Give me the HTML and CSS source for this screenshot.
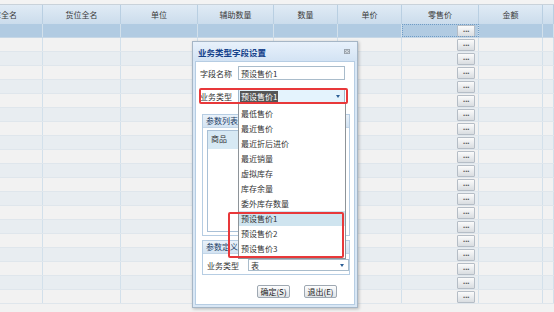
FILE: index.html
```html
<!DOCTYPE html>
<html lang="zh-CN">
<head>
<meta charset="utf-8">
<title>业务类型字段设置</title>
<link rel="stylesheet" href="styles.css">
</head>
<body>
<div class="screen">
  <div class="topstrip"></div>
  <div class="hdr">
    <span class="c first"><b>仓库全名</b></span><span class="c">货位全名</span><span class="c">单位</span><span class="c">辅助数量</span><span class="c">数量</span><span class="c">单价</span><span class="c">零售价</span><span class="c">金额</span><span class="c"></span>
  </div>
  <div class="rows">
    <div class="row sel"><span></span><span></span><span></span><span></span><span></span><span></span><span class="pc focus"><i class="dots">...</i></span><span></span><span></span></div>
    <div class="row"><span></span><span></span><span></span><span></span><span></span><span></span><span class="pc"><i class="dots">...</i></span><span></span><span></span></div>
    <div class="row alt"><span></span><span></span><span></span><span></span><span></span><span></span><span class="pc"><i class="dots">...</i></span><span></span><span></span></div>
    <div class="row"><span></span><span></span><span></span><span></span><span></span><span></span><span class="pc"><i class="dots">...</i></span><span></span><span></span></div>
    <div class="row alt"><span></span><span></span><span></span><span></span><span></span><span></span><span class="pc"><i class="dots">...</i></span><span></span><span></span></div>
    <div class="row"><span></span><span></span><span></span><span></span><span></span><span></span><span class="pc"><i class="dots">...</i></span><span></span><span></span></div>
    <div class="row alt"><span></span><span></span><span></span><span></span><span></span><span></span><span class="pc"><i class="dots">...</i></span><span></span><span></span></div>
    <div class="row"><span></span><span></span><span></span><span></span><span></span><span></span><span class="pc"><i class="dots">...</i></span><span></span><span></span></div>
    <div class="row alt"><span></span><span></span><span></span><span></span><span></span><span></span><span class="pc"><i class="dots">...</i></span><span></span><span></span></div>
    <div class="row"><span></span><span></span><span></span><span></span><span></span><span></span><span class="pc"><i class="dots">...</i></span><span></span><span></span></div>
    <div class="row alt"><span></span><span></span><span></span><span></span><span></span><span></span><span class="pc"><i class="dots">...</i></span><span></span><span></span></div>
    <div class="row"><span></span><span></span><span></span><span></span><span></span><span></span><span class="pc"><i class="dots">...</i></span><span></span><span></span></div>
    <div class="row alt"><span></span><span></span><span></span><span></span><span></span><span></span><span class="pc"><i class="dots">...</i></span><span></span><span></span></div>
    <div class="row"><span></span><span></span><span></span><span></span><span></span><span></span><span class="pc"><i class="dots">...</i></span><span></span><span></span></div>
    <div class="row alt"><span></span><span></span><span></span><span></span><span></span><span></span><span class="pc"><i class="dots">...</i></span><span></span><span></span></div>
    <div class="row"><span></span><span></span><span></span><span></span><span></span><span></span><span class="pc"><i class="dots">...</i></span><span></span><span></span></div>
    <div class="row alt"><span></span><span></span><span></span><span></span><span></span><span></span><span class="pc"><i class="dots">...</i></span><span></span><span></span></div>
    <div class="row"><span></span><span></span><span></span><span></span><span></span><span></span><span class="pc"><i class="dots">...</i></span><span></span><span></span></div>
    <div class="row alt"><span></span><span></span><span></span><span></span><span></span><span></span><span class="pc"><i class="dots">...</i></span><span></span><span></span></div>
    <div class="row"><span></span><span></span><span></span><span></span><span></span><span></span><span class="pc"><i class="dots">...</i></span><span></span><span></span></div>
  </div>

  <div class="dialog">
    <div class="dtitle">
      <span>业务类型字段设置</span>
      <svg class="close" width="6" height="5" viewBox="0 0 6 5"><rect width="6" height="5" fill="#9aa3ad"/><path d="M1 1L5 4M5 1L1 4" stroke="#e8edf2" stroke-width="0.8"/></svg>
    </div>
    <div class="dbody">
      <div class="frow r1">
        <label>字段名称</label>
        <div class="inp">预设售价1</div>
      </div>
      <div class="frow r2">
        <label>业务类型</label>
        <div class="inp sel-inp"><span class="hl">预设售价1</span><i class="arr"></i></div>
      </div>
      <div class="group g1">
        <div class="ghead">参数列表</div>
        <div class="gbox">
          <div class="gcell">商品</div>
        </div>
      </div>
      <div class="group g2">
        <div class="ghead">参数定义</div>
        <div class="frow r3">
          <label>业务类型</label>
          <div class="inp sel-inp2"><span>表</span><i class="arr"></i></div>
        </div>
      </div>
      <div class="btns">
        <button class="btn">确定(S)</button>
        <button class="btn">退出(E)</button>
      </div>
    </div>

    <ul class="dlist">
      <li>最低售价</li>
      <li>最近售价</li>
      <li>最近折后进价</li>
      <li>最近销量</li>
      <li>虚拟库存</li>
      <li>库存余量</li>
      <li>委外库存数量</li>
      <li class="on">预设售价1</li>
      <li>预设售价2</li>
      <li>预设售价3</li>
    </ul>
    <div class="redbox rb1"></div>
    <div class="redbox rb2"></div>
  </div>
</div>
</body>
</html>
```

FILE: styles.css
```css
html, body {
  margin: 0;
  padding: 0;
  background: #f2f2f2;
}
.screen {
  position: relative;
  width: 554px;
  height: 312px;
  overflow: hidden;
  font-family: "Noto Sans CJK SC", "Noto Sans", sans-serif;
  font-size: 8px;
  color: #333;
}
.topstrip {
  height: 4px;
  background: #f3f3f3;
  border-bottom: 1px solid #c9d2da;
}
.hdr, .row {
  display: grid;
  grid-template-columns: 43px 78px 77px 76px 64px 64px 77px 64px 1fr;
}
.hdr {
  height: 19px;
  background: linear-gradient(#e0ebf5, #cbdcec);
}
.hdr .c {
  display: flex;
  align-items: center;
  justify-content: center;
  border-right: 1px solid #b9cfe2;
  color: #3a3a3a;
  font-size: 8px;
  white-space: nowrap;
  overflow: hidden;
}
.hdr .first {
  justify-content: flex-end;
}
.hdr .first b {
  font-weight: normal;
  margin-right: 25px;
  flex-shrink: 0;
}
.row {
  height: 14px;
  box-sizing: border-box;
  border-bottom: 1px solid #dfe6ec;
  background: #f2f2f2;
}
.row.alt {
  background: #e8edf1;
}
.row.sel {
  background: #b1cbe2;
  border-bottom-color: #c6d7e6;
}
.row span {
  display: block;
  border-right: 1px solid #d2e0eb;
  position: relative;
}
.row .pc {
  display: flex;
  justify-content: flex-end;
  align-items: stretch;
  padding-right: 3px;
}
.row .focus {
  outline: 1px dotted #6f9cc6;
  outline-offset: -1px;
}
.dots {
  display: block;
  width: 16px;
  margin-top: 1px;
  background: linear-gradient(#fbfbfb, #d9dde1);
  border: 1px solid #b5bdc6;
  border-radius: 1px;
  font-style: normal;
  font-size: 7px;
  line-height: 9px;
  text-align: center;
  color: #5a5a5a;
  letter-spacing: -0.5px;
  font-family: "DejaVu Sans", sans-serif;
  font-weight: bold;
}

/* dialog */
.dialog {
  position: absolute;
  left: 192px;
  top: 41px;
  width: 164px;
  height: 265px;
  border: 1px solid #a6b6c6;
  background: #d9e7f5;
  box-shadow: 1px 1px 3px rgba(0,0,0,0.25);
  display: flex;
  flex-direction: column;
}
.dtitle {
  height: 19px;
  flex-shrink: 0;
  display: flex;
  align-items: center;
  justify-content: space-between;
  padding: 0 7px 0 5px;
  background: linear-gradient(#e8f1fb, #d3e3f4);
  color: #15428b;
  font-weight: bold;
  font-size: 8.5px;
}
.close {
  display: block;
}
.dbody {
  flex: 1;
  margin: 0 2px 2px 2px;
  background: #fff;
  border: 1px solid #b6cde3;
  padding: 4px 0 0 0;
  display: flex;
  flex-direction: column;
}
.frow {
  display: flex;
  align-items: center;
  height: 14px;
}
.frow label {
  width: 42px;
  padding-left: 4px;
  box-sizing: border-box;
  flex-shrink: 0;
  color: #333;
  white-space: nowrap;
}
.r2 {
  margin-top: 9px;
}
.inp {
  width: 107px;
  height: 14px;
  box-sizing: border-box;
  border: 1px solid #a9bccb;
  background: #fff;
  display: flex;
  align-items: center;
  padding-left: 2px;
  color: #333;
  white-space: nowrap;
}
.sel-inp {
  background: #e4f3fd;
  border-color: #9fb8cc;
  position: relative;
  padding-left: 1px;
}
.hl {
  background: #555;
  color: #fff;
  padding: 0 1px;
  line-height: 11px;
}
.arr {
  position: absolute;
  right: 4px;
  top: 5px;
  width: 0;
  height: 0;
  border-left: 2.5px solid transparent;
  border-right: 2.5px solid transparent;
  border-top: 3px solid #2d5f96;
}
.group {
  margin: 0 4px 0 6px;
  border: 1px solid #b6cde3;
}
.g1 {
  margin-top: 11px;
  height: 122px;
  box-sizing: border-box;
  display: flex;
  flex-direction: column;
}
.ghead {
  height: 12px;
  flex-shrink: 0;
  background: linear-gradient(#eaf2fa, #d3e3f2);
  border-bottom: 1px solid #c3d6e8;
  padding-left: 3px;
  line-height: 12px;
  color: #1f3f66;
}
.gbox {
  flex: 1;
  margin: 2px 4px 3px 4px;
  border: 1px solid #a9c0d6;
  background: #fff;
}
.gcell {
  width: 30px;
  height: 18px;
  background: #d7e9f4;
  padding-left: 3px;
  box-sizing: border-box;
  line-height: 16px;
}
.g2 {
  margin-top: 4px;
  padding-bottom: 3px;
}
.r3 {
  margin-top: 5px;
  height: 12px;
}
.r3 .frow label, .r3 label {
  width: 45px;
  padding-left: 4px;
}
.sel-inp2 {
  position: relative;
  height: 12px;
  width: 103px;
  border-color: #a9bccb;
}
.sel-inp2 .arr {
  top: 4px;
}
.btns {
  display: flex;
  justify-content: flex-end;
  gap: 14px;
  margin-top: 10px;
  padding-right: 17px;
}
.btn {
  height: 13px;
  padding: 0;
  width: 33px;
  font-family: "Noto Sans CJK SC", "Noto Sans", sans-serif;
  font-size: 8px;
  line-height: 11px;
  color: #222;
  background: linear-gradient(#fdfdfd, #dfe3e7);
  border: 1px solid #9ea8b2;
  border-radius: 2px;
}

.dlist {
  position: absolute;
  left: 45px;
  top: 61px;
  width: 108px;
  height: 156px;
  box-sizing: border-box;
  margin: 0;
  padding: 2px 0 0 0;
  list-style: none;
  background: #fff;
  border: 1px solid #8e9499;
}
.dlist li {
  height: 15px;
  line-height: 15px;
  padding-left: 2px;
  color: #333;
  white-space: nowrap;
}
.dlist li.on {
  background: #cfe4ef;
}
.redbox {
  position: absolute;
  border: 2px solid #e8383a;
  border-radius: 2px;
  box-sizing: border-box;
}
.rb1 {
  left: 6px;
  top: 46px;
  width: 149px;
  height: 16px;
}
.rb2 {
  left: 35px;
  top: 170px;
  width: 116px;
  height: 46px;
}
```
